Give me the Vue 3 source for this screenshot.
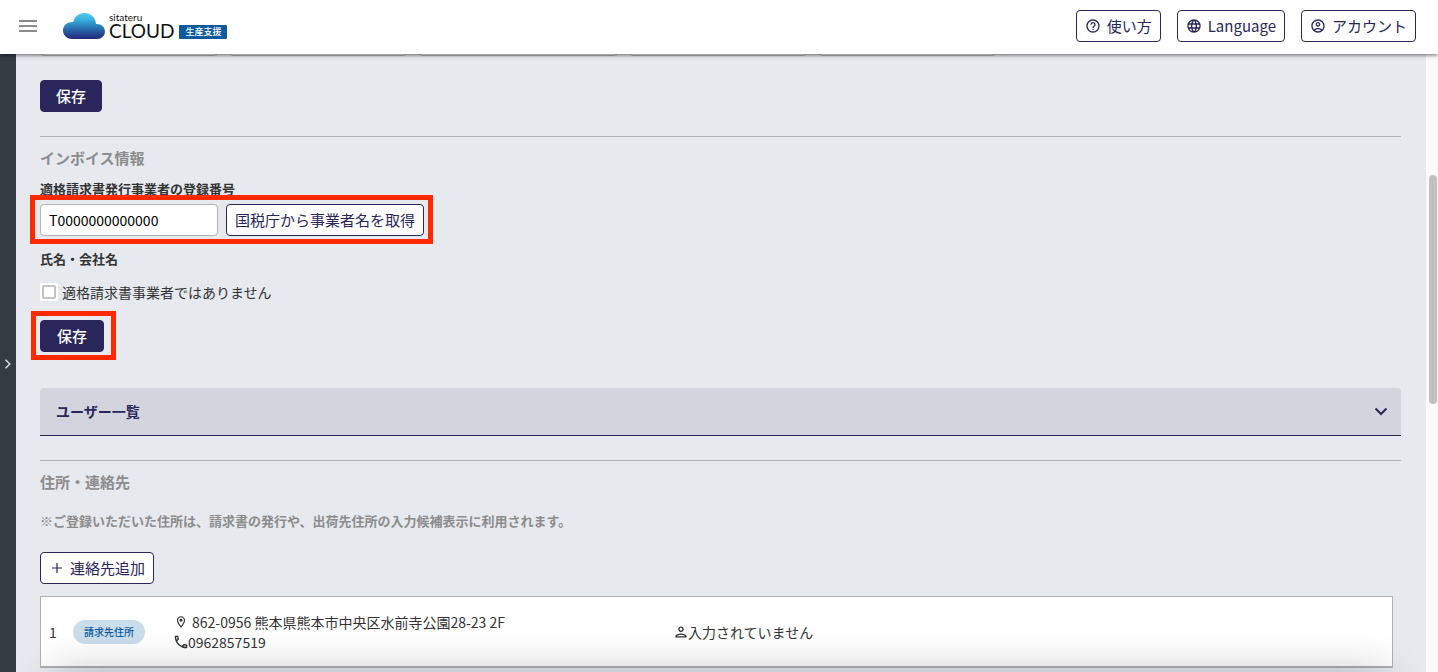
<script setup>
import { ref } from 'vue'

const registrationNumber = ref('T0000000000000')
const notQualified = ref(false)
const profileFields = [
  { label: '郵便番号', wide: false },
  { label: '都道府県', wide: false },
  { label: '市区町村', wide: true },
  { label: '番地', wide: false },
  { label: '建物名', wide: false },
]
const contacts = [
  {
    id: 1,
    kind: '請求先住所',
    address: '862-0956 熊本県熊本市中央区水前寺公園28-23 2F',
    phone: '0962857519',
    person: '入力されていません',
  },
]
</script>

<template>
  <div class="app">
    <header class="header">
      <button class="menu" type="button" aria-label="メニュー">
        <span></span><span></span><span></span>
      </button>
      <a class="logo" href="#">
        <svg class="cloud" viewBox="0 0 42 26" aria-hidden="true">
          <defs>
            <linearGradient id="sky" x1="0" y1="0" x2="0" y2="1">
              <stop offset="0" stop-color="#55ccf2" />
              <stop offset="0.25" stop-color="#38b0df" />
              <stop offset="0.6" stop-color="#286fb0" />
              <stop offset="1" stop-color="#252478" />
            </linearGradient>
          </defs>
          <path
            fill="url(#sky)"
            d="M9 26C4 26 0 22.2 0 17.500C0 12.800 4 9 9 9C9.500 9 9.900 9 10.300 9.100C11.200 3.900 15.800 0 21.500 0C27.800 0 32.800 4.800 33 11C33.400 10.900 33.700 10.900 34 10.900C38.500 10.900 42 14.200 42 18.500C42 22.700 38.500 26 34 26Z"
          />
        </svg>
        <span class="wordmark">
          <span class="brand">sitateru</span>
          <span class="product">CLOUD</span>
        </span>
        <span class="edition">生産支援</span>
      </a>
      <nav class="actions">
        <button class="btn outline" type="button">
          <svg class="icon" viewBox="0 0 24 24" aria-hidden="true">
            <path d="M11 18h2v-2h-2v2zm1-16C6.480 2 2 6.480 2 12s4.480 10 10 10 10-4.480 10-10S17.520 2 12 2zm0 18c-4.410 0-8-3.590-8-8s3.590-8 8-8 8 3.590 8 8-3.590 8-8 8zm0-14c-2.210 0-4 1.790-4 4h2c0-1.100.9-2 2-2s2 .9 2 2c0 2-3 1.750-3 5h2c0-2.250 3-2.500 3-5 0-2.210-1.790-4-4-4z" />
          </svg>
          使い方
        </button>
        <button class="btn outline" type="button">
          <svg class="icon" viewBox="0 0 24 24" aria-hidden="true">
            <path d="M11.990 2C6.470 2 2 6.480 2 12s4.470 10 9.990 10C17.520 22 22 17.520 22 12S17.520 2 11.990 2zm6.930 6h-2.950c-.32-1.250-.78-2.450-1.380-3.560 1.840.63 3.370 1.910 4.330 3.560zM12 4.040c.83 1.200 1.480 2.530 1.910 3.960h-3.820c.43-1.430 1.080-2.760 1.910-3.960zM4.260 14C4.100 13.360 4 12.690 4 12s.1-1.360.26-2h3.380c-.08.66-.14 1.320-.14 2s.06 1.340.14 2H4.260zm.82 2h2.950c.32 1.250.78 2.450 1.380 3.560-1.840-.63-3.370-1.900-4.330-3.560zm2.950-8H5.080c.96-1.660 2.490-2.930 4.330-3.560C8.810 5.550 8.350 6.750 8.030 8zM12 19.960c-.83-1.200-1.480-2.530-1.910-3.960h3.820c-.43 1.430-1.080 2.760-1.910 3.960zM14.340 14H9.660c-.09-.66-.16-1.320-.16-2s.07-1.350.16-2h4.680c.09.65.16 1.320.16 2s-.07 1.340-.16 2zm.25 5.560c.6-1.110 1.060-2.310 1.380-3.560h2.950c-.96 1.650-2.490 2.930-4.330 3.560zM16.360 14c.08-.66.14-1.320.14-2s-.06-1.340-.14-2h3.380c.16.64.26 1.310.26 2s-.1 1.360-.26 2h-3.380z" />
          </svg>
          Language
        </button>
        <button class="btn outline" type="button">
          <svg class="icon" viewBox="0 0 24 24" aria-hidden="true">
            <path d="M12 2C6.480 2 2 6.480 2 12s4.480 10 10 10 10-4.480 10-10S17.520 2 12 2zM7.350 18.500C8.660 17.560 10.260 17 12 17s3.340.56 4.650 1.500C15.340 19.440 13.740 20 12 20s-3.340-.56-4.650-1.500zm10.790-1.380C16.450 15.800 14.320 15 12 15s-4.450.8-6.140 2.120C4.700 15.730 4 13.950 4 12c0-4.420 3.580-8 8-8s8 3.580 8 8c0 1.950-.7 3.730-1.860 5.120zM12 6c-1.930 0-3.500 1.570-3.500 3.500S10.070 13 12 13s3.500-1.570 3.500-3.500S13.930 6 12 6zm0 5c-.83 0-1.500-.67-1.500-1.500S11.170 8 12 8s1.500.67 1.500 1.500S12.830 11 12 11z" />
          </svg>
          アカウント
        </button>
      </nav>
    </header>

    <div class="body">
      <button class="rail" type="button" aria-label="サイドバーを開く">
        <svg class="rail-icon" viewBox="0 0 10 10" aria-hidden="true">
          <path d="M3 1.500L6.500 5L3 8.500" fill="none" stroke="currentColor" stroke-width="1.300" />
        </svg>
      </button>

      <main class="content">
        <div class="profile-row">
          <input
            v-for="field in profileFields"
            :key="field.label"
            class="text-input"
            :class="{ wide: field.wide }"
            type="text"
            :aria-label="field.label"
          />
        </div>
        <button class="btn primary" type="button">保存</button>

        <section class="section invoice">
          <h2>インボイス情報</h2>
          <label class="field-label" for="registration">適格請求書発行事業者の登録番号</label>
          <div class="lookup marked">
            <input id="registration" v-model="registrationNumber" class="text-input" type="text" />
            <button class="btn outline" type="button">国税庁から事業者名を取得</button>
          </div>
          <p class="field-label name-label">氏名・会社名</p>
          <label class="check">
            <span class="check-box"><input v-model="notQualified" type="checkbox" /></span>
            適格請求書事業者ではありません
          </label>
          <div class="save marked">
            <button class="btn primary" type="button">保存</button>
          </div>
        </section>

        <button class="accordion" type="button" aria-expanded="false">
          ユーザー一覧
          <svg class="chevron" viewBox="0 0 16 16" aria-hidden="true">
            <path d="M2.500 5.500L8 11L13.500 5.500" fill="none" stroke="currentColor" stroke-width="2" />
          </svg>
        </button>

        <section class="section">
          <h2>住所・連絡先</h2>
          <p class="note">※ご登録いただいた住所は、請求書の発行や、出荷先住所の入力候補表示に利用されます。</p>
          <button class="btn outline" type="button">
            <svg class="icon" viewBox="0 0 16 16" aria-hidden="true">
              <path d="M7.400 3h1.200v4.400H13v1.200H8.600V13H7.400V8.600H3V7.400h4.400z" />
            </svg>
            連絡先追加
          </button>
          <table class="contacts">
            <tbody>
              <tr v-for="contact in contacts" :key="contact.id">
                <td class="num">{{ contact.id }}</td>
                <td class="kind"><span class="pill">{{ contact.kind }}</span></td>
                <td class="address">
                  <div class="line spaced">
                    <svg class="mini" viewBox="0 0 24 24" aria-hidden="true">
                      <path d="M12 2C8.130 2 5 5.130 5 9c0 5.250 7 13 7 13s7-7.750 7-13c0-3.870-3.130-7-7-7zM7 9c0-2.760 2.240-5 5-5s5 2.240 5 5c0 2.880-2.880 7.190-5 9.880C9.920 16.210 7 11.850 7 9z" />
                      <circle cx="12" cy="9" r="2.500" />
                    </svg>
                    {{ contact.address }}
                  </div>
                  <div class="line">
                    <svg class="mini" viewBox="2 2 20 20" aria-hidden="true">
                      <path d="M6.540 5c.06.89.21 1.760.45 2.590l-1.200 1.200c-.41-1.200-.67-2.470-.76-3.790h1.510m9.860 12.020c.85.24 1.720.39 2.600.45v1.490c-1.320-.09-2.590-.35-3.800-.75l1.200-1.190M7.500 3H4c-.55 0-1 .45-1 1 0 9.390 7.610 17 17 17 .55 0 1-.45 1-1v-3.490c0-.55-.45-1-1-1-1.240 0-2.450-.2-3.570-.57-.1-.04-.21-.05-.31-.05-.26 0-.51.1-.71.29l-2.200 2.200c-2.830-1.450-5.150-3.760-6.590-6.590l2.200-2.200c.28-.28.36-.67.25-1.020C8.700 6.450 8.500 5.250 8.500 4c0-.55-.45-1-1-1z" />
                    </svg>
                    {{ contact.phone }}
                  </div>
                </td>
                <td class="person">
                  <div class="line">
                    <svg class="mini" viewBox="2 2 20 20" aria-hidden="true">
                      <path d="M12 6c1.100 0 2 .9 2 2s-.9 2-2 2-2-.9-2-2 .9-2 2-2m0 10c2.700 0 5.800 1.290 6 2H6c.23-.72 3.310-2 6-2m0-12C9.790 4 8 5.790 8 8s1.790 4 4 4 4-1.790 4-4-1.790-4-4-4zm0 10c-2.670 0-8 1.340-8 4v2h16v-2c0-2.660-5.330-4-8-4z" />
                    </svg>
                    {{ contact.person }}
                  </div>
                </td>
              </tr>
            </tbody>
          </table>
        </section>
      </main>

      <div class="scrollbar" aria-hidden="true"><div class="thumb"></div></div>
    </div>
    <div class="bottom-shade" aria-hidden="true"></div>
  </div>
</template>

<style>
body {
  overflow: hidden;
}
</style>

<style scoped>
* {
  box-sizing: border-box;
}

.app {
  display: flex;
  flex-direction: column;
  height: 100vh;
  overflow: hidden;
  position: relative;
  background: #e6e9ee;
  color: #333;
  font-family: "Noto Sans CJK JP", sans-serif;
  font-size: 14px;
  line-height: 20px;
}

button,
input {
  font-family: inherit;
}

.header {
  position: relative;
  z-index: 1;
  flex: none;
  display: flex;
  align-items: center;
  height: 54px;
  padding: 0 22px 2px 19px;
  background: #fff;
  box-shadow: 0 1px 4px rgba(0, 0, 0, 0.6);
}

.menu {
  display: flex;
  flex-direction: column;
  gap: 3px;
  width: 18px;
  padding: 0;
  border: 0;
  background: none;
}

.menu span {
  height: 2px;
  background: #8a8a8a;
}

.logo {
  display: flex;
  align-items: flex-end;
  margin: 0 0 2px 26px;
  color: #111;
  text-decoration: none;
}

.cloud {
  width: 42px;
  height: 26px;
}

.wordmark {
  display: flex;
  flex-direction: column;
  margin-left: 4px;
  font-family: Lato, sans-serif;
}

.brand {
  font-size: 10px;
  line-height: 12px;
}

.product {
  font-size: 19px;
  line-height: 16px;
}

.edition {
  margin-left: 5px;
  padding: 0 6px;
  border-radius: 1px;
  background: #0c5a9d;
  color: #fff;
  font-size: 9px;
  font-weight: 500;
  line-height: 14px;
}

.actions {
  display: flex;
  gap: 16px;
  margin-left: auto;
}

.btn {
  display: inline-flex;
  align-items: center;
  gap: 5px;
  height: 32px;
  padding: 0 8px;
  border: 1px solid #28265a;
  border-radius: 4px;
  font-size: 15px;
  line-height: 20px;
  white-space: nowrap;
}

.actions .btn {
  gap: 6px;
}

.outline {
  background: #fff;
  color: #28265a;
}

.primary {
  padding: 0 15px;
  background: #28265a;
  color: #fff;
  font-weight: 500;
}

.icon {
  width: 16px;
  height: 16px;
  fill: currentColor;
}

.body {
  flex: 1;
  display: flex;
  min-height: 0;
}

.rail {
  flex: none;
  display: flex;
  align-items: center;
  justify-content: center;
  width: 16px;
  padding: 2px 0 0;
  border: 0;
  background: #353c44;
  color: #d5d8da;
}

.rail-icon {
  width: 12px;
  height: 12px;
}

.content {
  flex: 1;
  min-width: 0;
  padding: 0 25px 0 24px;
  overflow: hidden;
}

.profile-row {
  display: flex;
  gap: 11px;
  margin: -30px 0 24px;
}

.text-input {
  width: 178px;
  height: 32px;
  padding: 0 8px;
  border: 1px solid #b3b3b3;
  border-radius: 4px;
  background: #fff;
  color: #000;
  font-size: 14px;
}

.wide {
  width: 200px;
}

.section {
  margin-top: 24px;
  padding-top: 11px;
  border-top: 1px solid #b0b3b6;
}

h2 {
  margin: 0;
  color: #8c8c8c;
  font-size: 15px;
  font-weight: 700;
  line-height: 20px;
}

.field-label {
  display: block;
  margin: 11px 0 0;
  font-size: 13px;
  font-weight: 700;
  line-height: 20px;
}

.marked {
  position: relative;
  display: flex;
  width: fit-content;
}

.marked::after {
  content: "";
  position: absolute;
  inset: -9px -9px -8px -10px;
  border: 5px solid #ff2a00;
  pointer-events: none;
}

.lookup {
  gap: 8px;
  margin-top: 5px;
}

.save {
  margin-top: 18px;
}

.save::after {
  inset: -9px -12px -8px -9px;
}

.save .primary {
  padding: 0 16px;
}

.name-label {
  margin-top: 13px;
}

.check {
  display: flex;
  align-items: center;
  gap: 4px;
  width: fit-content;
  margin-top: 13px;
}

.check-box {
  display: flex;
  align-items: center;
  justify-content: center;
  width: 18px;
  height: 18px;
  border-radius: 2px;
  background: #fff;
}

.check-box input {
  appearance: none;
  width: 14px;
  height: 14px;
  margin: 0;
  border: 2px solid #c2c2c2;
  border-radius: 2px;
  background: #fff;
}

.check-box input:checked {
  background: #28265a;
}

.accordion {
  display: flex;
  align-items: center;
  justify-content: space-between;
  width: 100%;
  height: 48px;
  margin-top: 36px;
  padding: 0 12px 2px 16px;
  border: 0;
  border-bottom: 1px solid #28265a;
  border-radius: 4px 4px 0 0;
  background: #d4d4de;
  color: #28265a;
  font-size: 14px;
  font-weight: 700;
}

.chevron {
  width: 16px;
  height: 16px;
}

.note {
  margin: 19px 0 21px;
  color: #8c8c8c;
  font-size: 13px;
  font-weight: 700;
  line-height: 20px;
}

.contacts {
  width: calc(100% - 8px);
  margin-top: 12px;
  border: 1px solid #b0b0b0;
  border-bottom-width: 2px;
  border-spacing: 0;
  background: #fff;
  table-layout: fixed;
}

.contacts td {
  height: 69px;
  padding: 0;
}

.contacts .num {
  width: 32px;
  padding-left: 8px;
}

.contacts .kind {
  width: 101px;
}

.contacts .address {
  width: 500px;
}

.pill {
  display: inline-block;
  padding: 0 11px;
  border-radius: 12px;
  background: #cadded;
  color: #0c5a9d;
  font-size: 10px;
  font-weight: 500;
  line-height: 24px;
}

.line {
  display: flex;
  align-items: center;
}

.spaced {
  gap: 4px;
}

.mini {
  width: 14px;
  height: 14px;
  fill: currentColor;
}

.scrollbar {
  flex: none;
  width: 12px;
  padding: 121px 1px 0 3px;
  background: #fafafa;
}

.thumb {
  height: 229px;
  border-radius: 4px;
  background: #c1c1c1;
}

.bottom-shade {
  position: absolute;
  top: 100%;
  left: 56px;
  right: 56px;
  height: 40px;
  box-shadow: 0 0 40px 2px rgba(0, 0, 0, 0.22);
  pointer-events: none;
}
</style>
